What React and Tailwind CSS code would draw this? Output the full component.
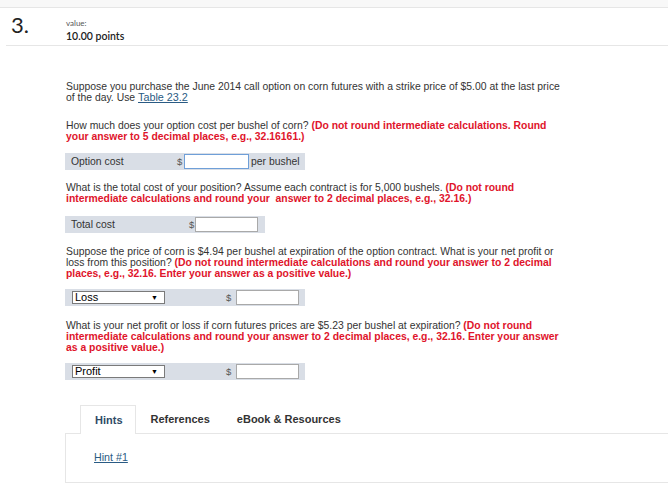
import React from "react";

const red = "font-bold text-[#e0142b]";

function Row({ width, children }) {
  return (
    <div className={`flex items-center h-[17px] bg-[#d9dee6] ${width}`}>{children}</div>
  );
}

function Select({ label }) {
  return (
    <div className="shrink-0 ml-[7px] w-[93px] h-[13px] bg-white border border-[#7a7a7a] flex items-center justify-between pl-[2px] pr-[6px] text-[11px] leading-none text-black">
      <span>{label}</span>
      <span className="text-[7px]">▼</span>
    </div>
  );
}

export default function App() {
  return (
    <div className="w-[668px] h-[484px] bg-white overflow-hidden font-['Liberation_Sans',Arial,sans-serif] text-[#333]">
      <div className="h-[8px] bg-[#f8f8f8] border-b border-[#e6e6e6]" />
      <div className="ml-[6px] h-[38px] border-b border-[#e6e6e6] flex font-['Lato','Open_Sans',sans-serif]">
        <div className="w-[60px] pl-[5px] pt-[6px] text-[22px] leading-none text-[#222]">3.</div>
        <div className="pt-[10px]">
          <div className="text-[8px] leading-[10px] text-[#555]">value:</div>
          <div className="mt-[2px] text-[10.5px] leading-[12px] font-semibold text-[#222]">10.00 points</div>
        </div>
      </div>

      <div className="ml-[66px] text-[10.4px] leading-[11px] whitespace-nowrap">
        <p className="mt-[35px]">
          Suppose you purchase the June 2014 call option on corn futures with a strike price of $5.00 at the last price
          <br />
          of the day. Use <a className="text-[10.8px] text-[#2a5b84] underline">Table 23.2</a>
        </p>

        <p className="mt-[17px]">
          How much does your option cost per bushel of corn? <span className={red}>(Do not round intermediate calculations. Round</span>
          <br />
          <span className={red}>your answer to 5 decimal places, e.g., 32.16161.)</span>
        </p>

        <div className="mt-[11px] -ml-[1px]">
          <Row width="w-[240px]">
            <span className="shrink-0 pl-[6px] w-[112px]">Option cost</span>
            <span className="shrink-0 w-[7px] text-[9.5px] text-[#555]">$</span>
            <div className="shrink-0 w-[65px] h-[15px] bg-white border border-[#6f9fd8]" />
            <span className="pl-[2px]">per bushel</span>
          </Row>
        </div>

        <p className="mt-[12px]">
          What is the total cost of your position? Assume each contract is for 5,000 bushels. <span className={red}>(Do not round</span>
          <br />
          <span className={red}>intermediate calculations and round your&nbsp; answer to 2 decimal places, e.g., 32.16.)</span>
        </p>

        <div className="mt-[12px] -ml-[1px]">
          <Row width="w-[200px]">
            <span className="shrink-0 pl-[6px] w-[124px]">Total cost</span>
            <span className="shrink-0 w-[6px] text-[9.5px] text-[#555]">$</span>
            <div className="shrink-0 w-[63px] h-[15px] bg-white border border-[#a9a9a9]" />
          </Row>
        </div>

        <p className="mt-[13px]">
          Suppose the price of corn is $4.94 per bushel at expiration of the option contract. What is your net profit or
          <br />
          loss from this position? <span className={red}>(Do not round intermediate calculations and round your answer to 2 decimal</span>
          <br />
          <span className={red}>places, e.g., 32.16. Enter your answer as a positive value.)</span>
        </p>

        <div className="mt-[10px] -ml-[1px]">
          <Row width="w-[240px]">
            <Select label="Loss" />
            <span className="shrink-0 ml-[61px] w-[10px] text-[9.5px] text-[#555]">$</span>
            <div className="shrink-0 w-[63px] h-[15px] bg-white border border-[#a9a9a9]" />
          </Row>
        </div>

        <p className="mt-[14px]">
          What is your net profit or loss if corn futures prices are $5.23 per bushel at expiration? <span className={red}>(Do not round</span>
          <br />
          <span className={red}>intermediate calculations and round your answer to 2 decimal places, e.g., 32.16. Enter your answer</span>
          <br />
          <span className={red}>as a positive value.)</span>
        </p>

        <div className="mt-[10px] -ml-[1px]">
          <Row width="w-[240px]">
            <Select label="Profit" />
            <span className="shrink-0 ml-[61px] w-[10px] text-[9.5px] text-[#555]">$</span>
            <div className="shrink-0 w-[63px] h-[15px] bg-white border border-[#a9a9a9]" />
          </Row>
        </div>
      </div>

      <div className="ml-[65px] mt-[25px]">
        <div className="flex items-end h-[28px] text-[11px] font-bold">
          <div className="ml-[15px] h-[29px] -mb-px pl-[14px] pr-[12px] flex items-center bg-white border border-b-0 border-[#e6e6e6] text-[#2f4a66]">Hints</div>
          <div className="h-[28px] ml-[15px] flex items-center text-[#333]">References</div>
          <div className="h-[28px] ml-[27px] flex items-center text-[#333]">eBook &amp; Resources</div>
        </div>
        <div className="h-[50px] border border-r-0 border-[#e6e6e6] pl-[28px] pt-[18px] text-[10.7px] leading-[11px]">
          <a className="text-[#2a5b84] underline">Hint #1</a>
        </div>
      </div>
    </div>
  );
}
